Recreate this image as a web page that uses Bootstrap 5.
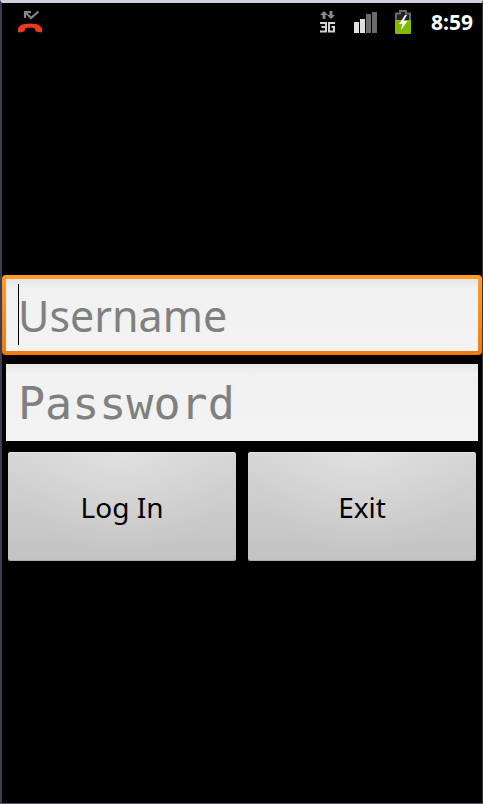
<!DOCTYPE html>
<html lang="en">
<head>
<meta charset="utf-8">
<meta name="viewport" content="width=device-width, initial-scale=1">
<title>Log In</title>
<link href="https://cdn.jsdelivr.net/npm/bootstrap@5.3.0/dist/css/bootstrap.min.css" rel="stylesheet">
<style>
body { font-family: "Noto Sans", "Open Sans", sans-serif; background: #000; }
.screen { border: 2px solid #3a3d50; border-top: 3px solid #d0d0dc; border-right: 1px solid #37373a; border-bottom: 1px solid #5d566e; }
.status-bar { height: 38px; padding: 0 9px 0 15px; color: #fff; }
.clock { font-size: 21px; line-height: 24px; margin-left: 19px; }
.login { padding-bottom: 8px; }
.field, .field:focus { height: 80px; padding: 0 12px; border: 4px solid #000; border-radius: 4px; outline: 0; box-shadow: none;
  color: #000; font-size: 43px; line-height: 72px;
  background: linear-gradient(#e6e6e6, #f0f1f0 10px, #f2f3f2) padding-box, #000 border-box; }
.field::placeholder { color: #808080; opacity: 1; }
.field:focus { border-color: transparent;
  background: linear-gradient(#e6e6e6, #f0f1f0 10px, #f2f3f2) padding-box, linear-gradient(#ff9c27, #f37a0c) border-box; }
.user-field { caret-color: transparent; }
.caret { position: absolute; left: 16px; top: 9px; width: 1px; height: 61px; background: #000; }
.pass-field, .pass-field:focus { height: 86px; padding-top: 2px; border-top-width: 5px; border-radius: 0; font-family: "DejaVu Sans Mono", monospace; font-size: 45px; }
.actions { gap: 12px; padding: 7px 6px 0; }
.key { height: 109px; border: 0; border-radius: 2px; color: #000; font-size: 28px; line-height: 36px;
  background: radial-gradient(ellipse at 50% 0, rgba(255,255,255,.25), transparent 70%), linear-gradient(#d6d6d6, #c2c2c2);
  box-shadow: inset 0 1px #e4e4e4, inset 0 -1px #aaa; }
</style>
<script src="https://cdn.jsdelivr.net/npm/bootstrap@5.3.0/dist/js/bootstrap.bundle.min.js"></script>
</head>
<body>
<div class="screen min-vh-100 d-flex flex-column">
  <header class="status-bar d-flex align-items-center">
    <svg width="26" height="26" viewBox="0 0 26 26" aria-label="Missed call" role="img">
      <path d="M8 9V3H14M8.500 3.500L14 9L21.500 2.500" fill="none" stroke="#858585" stroke-width="2.200"/>
      <path d="M1 22Q0 14.500 13 14.500T25 22Q25 23.500 23.500 23.500L19 22.500Q18 22 18 19.500Q13 17.500 8 19.500Q8 22 7 22.500L2.500 23.500Q1 23.500 1 22Z" fill="#ea3a22"/>
    </svg>
    <svg class="ms-auto" width="16" height="26" viewBox="0 0 16 26" aria-label="3G" role="img">
      <path d="M4 2L8 6H5.500V10H2.500V6H0ZM11 10L7 6H9.500V2H12.500V6H15Z" fill="#8a8a8a"/>
      <path d="M0 14H6V22.500H0M1.500 18H6M15 14H9V22.500H14V18H11.500" fill="none" stroke="#d2d2d2" stroke-width="2"/>
    </svg>
    <svg class="ms-3" width="26" height="26" viewBox="0 0 26 26" aria-label="Signal" role="img">
      <path d="M2 13h5v11H2zM8 10h5v14H8z" fill="#e0e0e0"/>
      <path d="M14 5h5v19h-5zM20 3h5v21h-5z" fill="#6a6a6a"/>
    </svg>
    <svg class="ms-3" width="18" height="26" viewBox="0 0 18 26" aria-label="Battery charging" role="img">
      <path d="M2 11V4.500H6V2H12V4.500H16V11" fill="#222" stroke="#686868" stroke-width="2"/>
      <path d="M1 11H17V24Q17 25 16 25H2Q1 25 1 24Z" fill="#83b900"/>
      <path d="M11 6L5 15H8.500L7 21L13.500 12H9.500L13 6Z" fill="#fff"/>
    </svg>
    <time class="clock fw-bold">8:59</time>
  </header>
  <form class="login my-auto" onsubmit="return false">
    <div class="position-relative mb-1">
      <label for="user" class="d-none">Username</label>
      <input id="user" class="form-control field user-field" type="text" placeholder="Username" autofocus>
      <span class="caret"></span>
    </div>
    <div>
      <label for="pass" class="d-none">Password</label>
      <input id="pass" class="form-control field pass-field" type="password" placeholder="Password">
    </div>
    <div class="actions d-flex">
      <button class="btn key flex-fill w-50" type="submit">Log In</button>
      <button class="btn key flex-fill w-50" type="button">Exit</button>
    </div>
  </form>
</div>
</body>
</html>
